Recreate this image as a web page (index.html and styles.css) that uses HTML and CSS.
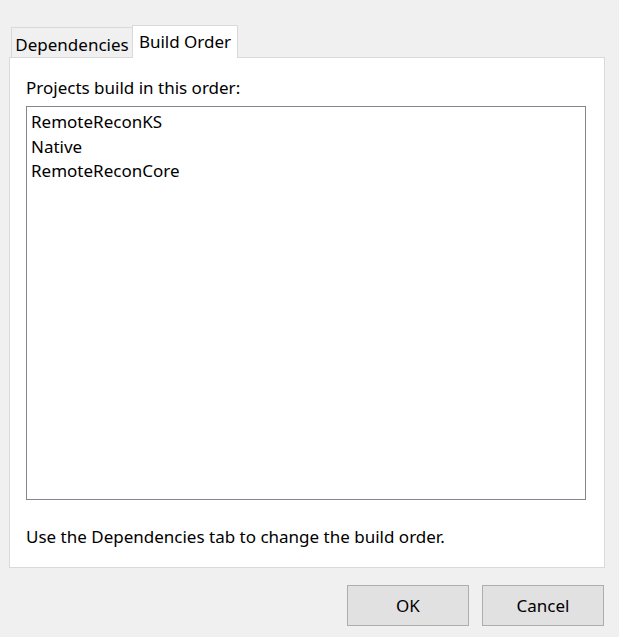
FILE: index.html
```html
<!DOCTYPE html>
<html>
<head>
<meta charset="utf-8">
<link rel="stylesheet" href="styles.css">
</head>
<body>
<div class="dialog">
  <div class="tabs">
    <div class="tab">Dependencies</div>
    <div class="tab active">Build Order</div>
  </div>
  <div class="panel">
    <div class="label">Projects build in this order:</div>
    <div class="listbox">
      <div class="item">RemoteReconKS</div>
      <div class="item">Native</div>
      <div class="item">RemoteReconCore</div>
    </div>
    <div class="hint">Use the Dependencies tab to change the build order.</div>
  </div>
  <div class="buttons">
    <button class="btn">OK</button>
    <button class="btn">Cancel</button>
  </div>
</div>
</body>
</html>
```
FILE: styles.css
```css
html, body {
  margin: 0;
  padding: 0;
  background: #f0f0f0;
  font-family: "Noto Sans", "Open Sans", sans-serif;
  font-size: 17px;
  color: #000;
}
.dialog {
  width: 619px;
  height: 637px;
  box-sizing: border-box;
  padding: 25px 14px 0 9px;
  display: flex;
  flex-direction: column;
}
.tabs {
  display: flex;
  align-items: flex-start;
  height: 33px;
  padding-left: 2px;
  position: relative;
  z-index: 1;
  margin-bottom: -1px;
}
.tab {
  box-sizing: border-box;
  height: 30px;
  width: 122px;
  margin-top: 2px;
  border: 1px solid #d9d9d9;
  border-bottom: none;
  background: #f0f0f0;
  display: flex;
  align-items: center;
  justify-content: center;
  padding-top: 3px;
}
.tab.active {
  height: 33px;
  width: 106px;
  margin-top: 0;
  margin-left: -1px;
  background: #fff;
  padding-top: 0;
  padding-bottom: 1px;
}
.panel {
  box-sizing: border-box;
  height: 511px;
  border: 1px solid #d9d9d9;
  background: #fff;
  padding: 18px 18px 0 16px;
  display: flex;
  flex-direction: column;
}
.label {
  line-height: 24px;
  height: 30px;
}
.listbox {
  box-sizing: border-box;
  height: 394px;
  border: 1px solid #828790;
  padding: 3px 4px;
}
.item {
  line-height: 24.5px;
}
.hint {
  margin-top: 25px;
  line-height: 24px;
}
.buttons {
  display: flex;
  justify-content: flex-end;
  gap: 13px;
  margin-top: 17px;
  padding-right: 1px;
}
.btn {
  width: 122px;
  height: 41px;
  background: #e1e1e1;
  border: 1px solid #adadad;
  font-family: inherit;
  font-size: 17px;
  color: #000;
  padding: 0;
}
```
